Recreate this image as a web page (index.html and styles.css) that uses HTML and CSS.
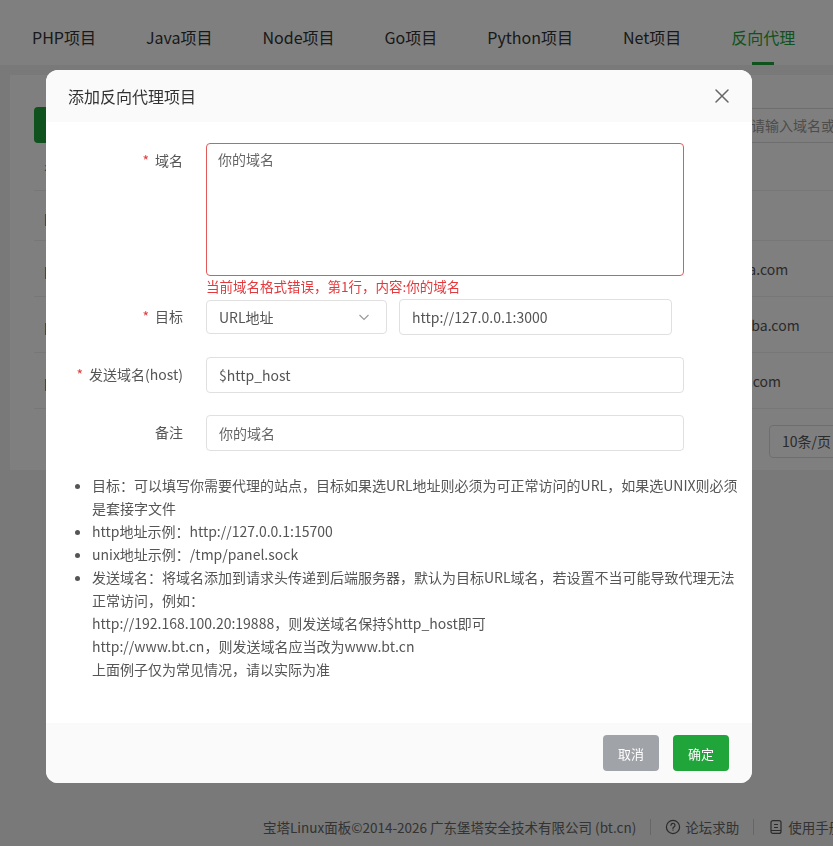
FILE: index.html
```html
<!DOCTYPE html>
<html lang="zh-CN">
<head>
  <meta charset="utf-8">
  <title>网站 - 反向代理</title>
  <link rel="stylesheet" href="styles.css">
</head>
<body>
  <div class="page">
    <nav class="tabs">
      <a class="tab">PHP项目</a>
      <a class="tab">Java项目</a>
      <a class="tab">Node项目</a>
      <a class="tab">Go项目</a>
      <a class="tab">Python项目</a>
      <a class="tab">Net项目</a>
      <a class="tab active">反向代理</a>
    </nav>

    <div class="panel">
      <div class="toolbar">
        <button class="btn-add">添加反向代理</button>
        <div class="search">请输入域名或备注</div>
      </div>
      <div class="table">
        <div class="thead">
          <span class="cell name">名称</span>
          <span class="cell domain">域名</span>
        </div>
        <div class="row short">
          <span class="cell name">proxy_demo</span>
          <span class="cell domain"></span>
        </div>
        <div class="row">
          <span class="cell name">proxy_test</span>
          <span class="cell domain">test.a.com</span>
        </div>
        <div class="row">
          <span class="cell name">proxy_web</span>
          <span class="cell domain">web.ba.com</span>
        </div>
        <div class="row">
          <span class="cell name">proxy_blog</span>
          <span class="cell domain">blog.com</span>
        </div>
      </div>
      <div class="pager">
        <span class="page-size">10条/页</span>
      </div>
    </div>

    <footer class="copyright">
      <span>宝塔Linux面板©2014-2026 广东堡塔安全技术有限公司 (bt.cn)</span>
      <span class="sep"></span>
      <span class="link">
        <svg width="16" height="16" viewBox="0 0 16 16" fill="none" stroke="#555" stroke-width="1.2">
          <circle cx="8" cy="8" r="6.6"/>
          <path d="M6 6.3a2 2 0 1 1 2.8 1.8c-.5.3-.8.6-.8 1.3v.6" stroke-linecap="round"/>
          <circle cx="8" cy="11.6" r=".5" fill="#555" stroke="none"/>
        </svg>
        论坛求助
      </span>
      <span class="sep"></span>
      <span class="link">
        <svg width="16" height="16" viewBox="0 0 16 16" fill="none" stroke="#555" stroke-width="1.2">
          <rect x="3" y="1.6" width="10" height="12.8" rx="2"/>
          <path d="M6 5.5h4M6 8.5h4M3 11.5h10"/>
        </svg>
        使用手册
      </span>
    </footer>
  </div>

  <div class="mask"></div>

  <div class="dialog">
    <div class="dialog-head">
      <span class="dialog-title">添加反向代理项目</span>
      <svg class="dialog-close" width="16" height="16" viewBox="0 0 16 16" stroke="#666" stroke-width="1.5" stroke-linecap="round">
        <path d="M2 2l12 12M14 2L2 14"/>
      </svg>
    </div>

    <div class="dialog-body">
      <div class="form-item">
        <label class="form-label top"><i>*</i>域名</label>
        <div class="form-field">
          <textarea class="textarea error" placeholder="你的域名"></textarea>
          <div class="form-error">当前域名格式错误，第1行，内容:你的域名</div>
        </div>
      </div>

      <div class="form-item">
        <label class="form-label"><i>*</i>目标</label>
        <div class="form-field inline">
          <div class="select">
            <span>URL地址</span>
            <svg width="14" height="14" viewBox="0 0 14 14" fill="none" stroke="#999" stroke-width="1.1">
              <path d="M2.5 5l4.5 4.5L11.5 5"/>
            </svg>
          </div>
          <input class="input url" value="http://127.0.0.1:3000">
        </div>
      </div>

      <div class="form-item">
        <label class="form-label"><i>*</i>发送域名(host)</label>
        <div class="form-field">
          <input class="input" value="$http_host">
        </div>
      </div>

      <div class="form-item">
        <label class="form-label">备注</label>
        <div class="form-field">
          <input class="input" placeholder="你的域名">
        </div>
      </div>

      <ul class="tips">
        <li>目标：可以填写你需要代理的站点，目标如果选URL地址则必须为可正常访问的URL，如果选UNIX则必须是套接字文件</li>
        <li>http地址示例：http://127.0.0.1:15700</li>
        <li>unix地址示例：/tmp/panel.sock</li>
        <li>发送域名：将域名添加到请求头传递到后端服务器，默认为目标URL域名，若设置不当可能导致代理无法正常访问，例如：<br>
          http://192.168.100.20:19888，则发送域名保持$http_host即可<br>
          http://www.bt.cn，则发送域名应当改为www.bt.cn<br>
          上面例子仅为常见情况，请以实际为准</li>
      </ul>
    </div>

    <div class="dialog-foot">
      <button class="btn btn-cancel">取消</button>
      <button class="btn btn-ok">确定</button>
    </div>
  </div>
</body>
</html>
```

FILE: styles.css
```css
html, body {
  margin: 0;
  padding: 0;
  overflow: hidden;
}

body {
  background-color: #f2f2f2;
  font-family: "Noto Sans CJK SC", "Noto Sans", sans-serif;
  font-size: 14px;
  color: #555;
}

.page {
  width: 1020px;
  height: 846px;
  display: flex;
  flex-direction: column;
}

/* top tab bar */
.tabs {
  height: 65px;
  background-color: #fff;
  display: flex;
  padding-left: 7px;
}

.tab {
  position: relative;
  padding: 0 25px;
  line-height: 74px;
  font-size: 16px;
  color: #333;
}

.tab.active {
  color: #20a53a;
}

.tab.active::after {
  content: "";
  position: absolute;
  left: 50%;
  bottom: 0;
  width: 22px;
  height: 3px;
  margin-left: -11px;
  background-color: #20a53a;
}

/* list card */
.panel {
  margin: 10px 10px 0;
  height: 395px;
  background-color: #fff;
  padding: 32px 24px 0;
  box-sizing: border-box;
}

.toolbar {
  display: flex;
  justify-content: space-between;
  align-items: center;
}

.btn-add {
  height: 36px;
  padding: 0 16px;
  border: 0;
  border-radius: 4px;
  background-color: #20a53a;
  color: #fff;
  font: inherit;
}

.search {
  width: 241px;
  height: 35px;
  box-sizing: border-box;
  border: 1px solid #ddd;
  border-radius: 4px;
  padding-left: 5px;
  line-height: 33px;
  color: #999;
}

.thead,
.row {
  display: flex;
  align-items: center;
  border-bottom: 1px solid #eee;
}

.thead {
  height: 47px;
  color: #666;
}

.row {
  height: 55px;
}

.row.short {
  height: 49px;
}

.cell.name {
  width: 686px;
  padding-left: 10px;
  box-sizing: border-box;
}

.pager {
  padding: 16px 0 0 735px;
}

.page-size {
  display: inline-block;
  width: 90px;
  height: 33px;
  box-sizing: border-box;
  border: 1px solid #ddd;
  border-radius: 4px;
  padding-left: 12px;
  line-height: 31px;
}

.copyright {
  margin-top: auto;
  height: 38px;
  display: flex;
  align-items: center;
  padding-left: 263px;
  font-size: 13.5px;
  color: #666;
}

.copyright .sep {
  width: 1px;
  height: 16px;
  background-color: #ccc;
  margin: 0 14px;
}

.copyright .link {
  display: flex;
  align-items: center;
  gap: 4px;
}

/* modal */
.mask {
  position: fixed;
  top: 0;
  left: 0;
  right: 0;
  bottom: 0;
  background-color: rgba(0, 0, 0, 0.5);
}

.dialog {
  position: absolute;
  left: 46px;
  top: 70px;
  width: 706px;
  background-color: #fff;
  border-radius: 12px;
  overflow: hidden;
}

.dialog-head {
  height: 52px;
  background-color: #fafafa;
  display: flex;
  align-items: center;
  justify-content: space-between;
  padding: 0 22px;
}

.dialog-title {
  font-size: 16px;
  color: #333;
}

.dialog-body {
  padding-top: 21px;
}

.form-item {
  display: flex;
  margin-bottom: 22px;
}

.form-item:first-child {
  margin-bottom: 4px;
}

.form-label {
  width: 160px;
  box-sizing: border-box;
  padding-right: 23px;
  text-align: right;
  line-height: 35px;
  color: #555;
}

.form-label.top {
  line-height: 20px;
  padding-top: 7px;
}

.form-label i {
  font-style: normal;
  color: #e4393c;
  margin-right: 6px;
}

.form-field {
  width: 478px;
}

.form-field.inline {
  display: flex;
  align-items: center;
  gap: 12px;
}

.textarea,
.input {
  display: block;
  box-sizing: border-box;
  width: 100%;
  border: 1px solid #e0e0e0;
  border-radius: 4px;
  font: inherit;
  color: #555;
  outline: none;
}

.textarea {
  height: 133px;
  padding: 5px 11px;
  line-height: 20px;
  resize: none;
}

.textarea.error {
  border-color: #e05a5a;
}

.textarea::placeholder,
.input::placeholder {
  color: #666;
}

.form-error {
  margin-top: 1px;
  line-height: 18px;
  font-size: 13.5px;
  color: #e4393c;
}

.input {
  height: 36px;
  padding: 0 12px;
}

.input.url {
  width: 273px;
}

.select {
  width: 181px;
  height: 34px;
  box-sizing: border-box;
  border: 1px solid #e0e0e0;
  border-radius: 4px;
  padding: 0 15px 0 12px;
  display: flex;
  align-items: center;
  justify-content: space-between;
  color: #555;
}

.tips {
  margin: 23px 0 0;
  padding: 0 14px 42px 46px;
  line-height: 23px;
  color: #555;
}

.dialog-foot {
  height: 60px;
  background-color: #fafafa;
  display: flex;
  justify-content: flex-end;
  align-items: center;
  gap: 14px;
  padding-right: 23px;
}

.btn {
  width: 56px;
  height: 36px;
  border: 0;
  border-radius: 4px;
  font: inherit;
  font-size: 13px;
  color: #fff;
}

.btn-cancel {
  background-color: #a0a3a8;
}

.btn-ok {
  background-color: #20a53a;
}
```
